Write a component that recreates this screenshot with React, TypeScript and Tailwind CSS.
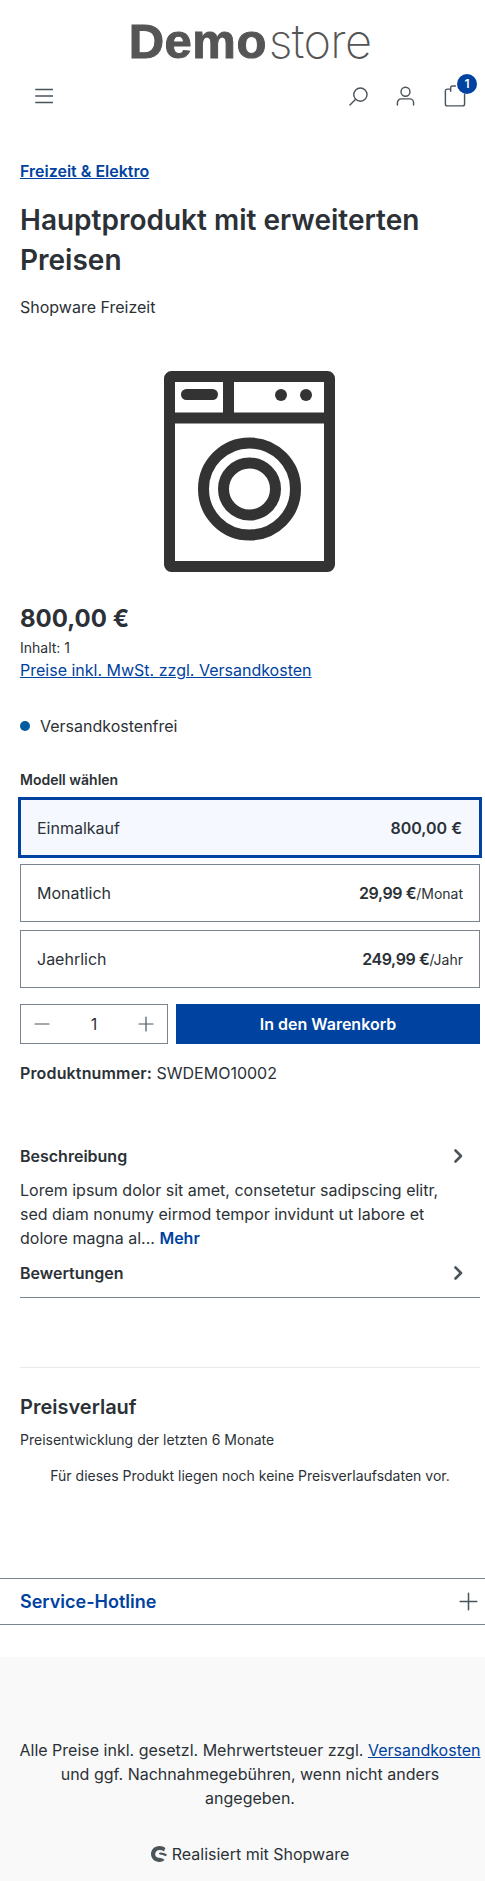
import React from "react";

const Chevron: React.FC = () => (
  <svg width="16" height="16" viewBox="0 0 16 16" fill="none" stroke="#4a545b" strokeWidth="2.6" strokeLinecap="round" strokeLinejoin="round">
    <path d="M5.500 2.500 11 8l-5.500 5.500" />
  </svg>
);

const Plus: React.FC<{ size?: number; width?: number }> = ({ size = 16, width = 1.2 }) => (
  <svg width={size} height={size} viewBox="0 0 16 16" fill="none" stroke="#4a545b" strokeWidth={width} strokeLinecap="round">
    <path d="M8 1v14M1 8h14" />
  </svg>
);

const WashingMachine: React.FC = () => (
  <svg width="172" height="202" viewBox="0 0 172 202" fill="none">
    <rect x="5.500" y="5.500" width="160" height="190" rx="2" stroke="#333" strokeWidth="11" />
    <path d="M5 47h162M64.500 6v41" stroke="#333" strokeWidth="11" />
    <rect x="17" y="18" width="37" height="11" rx="5.500" fill="#333" />
    <circle cx="117" cy="24" r="6" fill="#333" />
    <circle cx="142" cy="24" r="6" fill="#333" />
    <circle cx="85.500" cy="118" r="46" stroke="#333" strokeWidth="11" />
    <circle cx="85.500" cy="118" r="26" stroke="#333" strokeWidth="11" />
  </svg>
);

const Option: React.FC<{ label: string; price: string; unit?: string; active?: boolean }> = ({ label, price, unit, active }) => (
  <div
    className={
      active
        ? "-mx-0.5 -mb-0.5 flex h-[61px] items-center justify-between border-[3px] border-[#0042a0] bg-[#f5f8ff] pl-[16px] pr-[17px]"
        : "flex h-[58px] items-center justify-between border border-[#798490] pl-[16px] pr-[16px]"
    }
  >
    <span>{label}</span>
    <span>
      <span className={unit ? "font-semibold tracking-[-0.4px]" : "font-semibold"}>{price}</span>
      {unit && <span className="text-sm">{unit}</span>}
    </span>
  </div>
);

const App: React.FC = () => {
  return (
    <div className="w-[485px] overflow-hidden bg-white text-base leading-6 text-[#2b3136] font-['Inter',sans-serif]">
      <header className="pt-[13px]">
        <div className="flex h-[56px] items-center justify-center pl-5 pr-[5px] text-[49px] leading-[56px] text-[#555] font-['Liberation_Sans',sans-serif]">
          <span className="font-bold tracking-[0.5px] [-webkit-text-stroke:1px_#555]">Demo</span>
          <span className="ml-[2px] font-['Inter',sans-serif] text-[47px] font-extralight tracking-[-0.7px]">store</span>
        </div>
        <div className="mt-[15px] flex h-[24px] items-center pl-[35px] pr-[1px]">
          <svg width="18" height="16" viewBox="0 0 18 16" fill="none" stroke="#4a545b" strokeWidth="1.500" strokeLinecap="round">
            <path d="M.8 1.500h16.800M.8 8h16.800M.8 14.500h16.800" />
          </svg>
          <svg className="ml-auto" width="19" height="19" viewBox="0 0 20 20" fill="none" stroke="#4a545b" strokeWidth="1.500" strokeLinecap="round">
            <circle cx="12" cy="8" r="7" />
            <path d="M7 13 1 19" />
          </svg>
          <svg className="ml-[28px]" width="19" height="20" viewBox="0 0 20 20" fill="none" stroke="#4a545b" strokeWidth="1.500" strokeLinecap="round">
            <circle cx="10" cy="5.500" r="4.700" />
            <path d="M1.500 19.500v-2.500a4 4 0 0 1 4-4h9a4 4 0 0 1 4 4v2.500" />
          </svg>
          <div className="relative ml-[28px] h-[24px] w-[41px]">
            <svg width="23" height="24" viewBox="0 0 24 24" fill="none" stroke="#4a545b" strokeWidth="1.500" strokeLinecap="round" strokeLinejoin="round">
              <path d="M8 4.800H4.500a2 2 0 0 0-2 2v13.500a2 2 0 0 0 2 2h16a2 2 0 0 0 2-2V10M8 7V3.500a2 2 0 0 1 2-2h3" />
            </svg>
            <span className="absolute left-[14px] top-[-10px] flex h-5 w-5 items-center justify-center rounded-full bg-[#0042a0] text-xs font-semibold text-white">
              1
            </span>
          </div>
        </div>
      </header>

      <main className="pl-5 pr-[5px]">
        <a className="mt-[51px] block font-semibold text-[#0042a0] underline">Freizeit &amp; Elektro</a>
        <h1 className="mt-[17px] text-[28px] font-semibold leading-[40px]">Hauptprodukt mit erweiterten Preisen</h1>
        <p className="mt-[15px]">Shopware Freizeit</p>

        <div className="mt-[52px] flex justify-center">
          <WashingMachine />
        </div>

        <p className="mt-[30px] text-2xl font-bold leading-8">800,00 €</p>
        <p className="mt-[2px] text-sm leading-[21px]">Inhalt: 1</p>
        <a className="block text-[#0042a0] underline">Preise inkl. MwSt. zzgl. Versandkosten</a>

        <div className="mt-[32px] flex items-center">
          <span className="h-2.5 w-2.5 rounded-full bg-[#005b9f]" />
          <span className="ml-[10px]">Versandkostenfrei</span>
        </div>

        <p className="mt-[31px] text-sm font-semibold leading-[21px]">Modell wählen</p>
        <div className="mt-[7px] flex flex-col gap-[8px]">
          <Option active label="Einmalkauf" price="800,00 €" />
          <Option label="Monatlich" price="29,99 €" unit="/Monat" />
          <Option label="Jaehrlich" price="249,99 €" unit="/Jahr" />
        </div>

        <div className="mt-[16px] flex gap-2">
          <div className="flex h-10 w-[148px] items-center justify-between border border-[#798490] pl-[13px] pr-[13px]">
            <svg width="16" height="16" viewBox="0 0 16 16" fill="none" stroke="#4a545b" strokeWidth="1.2" strokeLinecap="round">
              <path d="M1 8h14" />
            </svg>
            <span>1</span>
            <Plus />
          </div>
          <button className="h-10 flex-1 bg-[#0042a0] font-semibold text-white">In den Warenkorb</button>
        </div>

        <p className="mt-[17px]">
          <span className="font-semibold tracking-[0.15px]">Produktnummer:</span> SWDEMO10002
        </p>

        <div className="mt-[59px] flex items-center justify-between pr-[14px] font-semibold">
          Beschreibung
          <Chevron />
        </div>
        <p className="mt-[10px] pr-5">
          Lorem ipsum dolor sit amet, consetetur sadipscing elitr, sed diam nonumy eirmod tempor invidunt ut labore et dolore magna al...{" "}
          <span className="font-semibold text-[#0042a0]">Mehr</span>
        </p>
        <div className="mt-[11px] flex items-center justify-between border-b border-[#798490] pb-[12px] pr-[14px] font-semibold">
          Bewertungen
          <Chevron />
        </div>

        <div className="mt-[69px] border-t border-[#e8e9eb] pt-[24px]">
          <h2 className="text-xl font-semibold leading-[30px]">Preisverlauf</h2>
          <p className="mt-[7px] text-sm leading-[21px]">Preisentwicklung der letzten 6 Monate</p>
          <p className="mt-[15px] text-center text-sm leading-[21px]">Für dieses Produkt liegen noch keine Preisverlaufsdaten vor.</p>
        </div>
      </main>

      <div className="mt-[92px] flex h-[47px] items-center justify-between border-y border-[#798490] pl-5 pr-[7px]">
        <span className="text-lg font-semibold text-[#0042a0]">Service-Hotline</span>
        <Plus size={19} width={1.3} />
      </div>

      <footer className="mt-[32px] bg-[#f9f9f9] pb-[16px] pl-[18px] pr-[3px] pt-[81px] text-center">
        <p>
          Alle Preise inkl. gesetzl. Mehrwertsteuer zzgl. <a className="text-[#0042a0] underline">Versandkosten</a> und ggf. Nachnahmegebühren, wenn nicht anders angegeben.
        </p>
        <div className="mt-[32px] flex items-center justify-center gap-[5px]">
          <svg width="16" height="16" viewBox="0 0 16 16" fill="#4a545b">
            <path d="M13.500 13.800C11.500 12.400 9.500 11.900 7.800 11.800 5.800 11.700 4.200 10.200 4.200 8.200c0-2.300 1.900-4.100 4.300-4.100 1.500 0 3.100.4 4.700 1.300.2-1.200.4-2.300 1.300-3.100C13.200.8 11 0 8.400 0 3.700 0 0 3.600 0 8s3.700 8 8.400 8c2 0 3.800-.8 5.100-2.200ZM16 8.700c-1.400-1.100-3.700-1.900-6.500-2.100-.7 0-1.500.4-1.500 1 0 .5.400.8 1 .9 2 .2 3.800.8 5.500 1.700.8-.6 1.500-1.200 1.500-1.500Z" />
          </svg>
          <span>Realisiert mit Shopware</span>
        </div>
      </footer>
    </div>
  );
};

export default App;
